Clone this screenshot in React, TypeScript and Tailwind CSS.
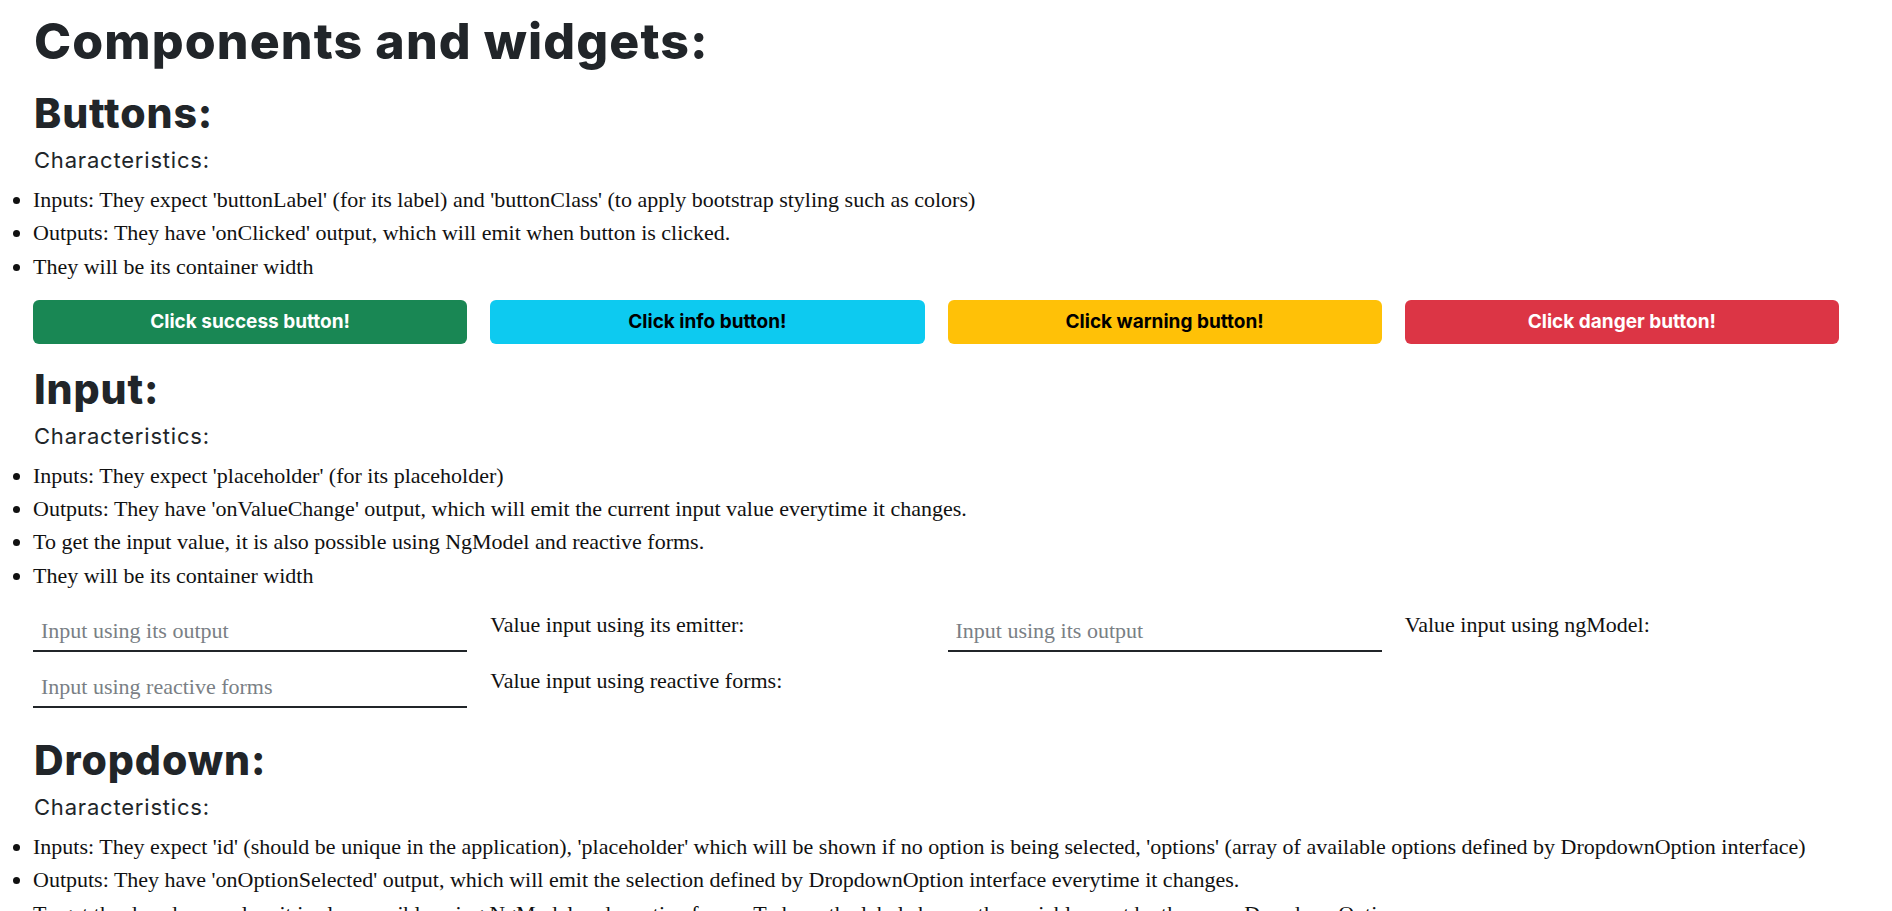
import React from "react";

function Characteristics() {
  return (
    <p className="mt-[6px] ml-[1px] font-['Inter','Noto_Sans',sans-serif] text-[22px] leading-[33px] text-[#212529] font-normal tracking-[0.8px]">
      Characteristics:
    </p>
  );
}

function Bullets({ items }: { items: string[] }) {
  return (
    <ul className="list-disc list-outside mt-[6px] font-['Liberation_Serif','DejaVu_Serif',serif] text-[22px] leading-[33.3px] text-[#111]">
      {items.map((t, i) => (
        <li key={i} className="whitespace-nowrap pl-0">
          {t}
        </li>
      ))}
    </ul>
  );
}

function H2({ children, mt }: { children: React.ReactNode; mt: string }) {
  return (
    <h2
      className={`${mt} ml-[1px] font-['Inter','Noto_Sans',sans-serif] text-[41px] leading-[49px] font-extrabold text-[#212529] tracking-[0.9px]`}
    >
      {children}
    </h2>
  );
}

const btns = [
  { label: "Click success button!", cls: "bg-[#198754] text-white" },
  { label: "Click info button!", cls: "bg-[#0dcaf0] text-black" },
  { label: "Click warning button!", cls: "bg-[#ffc107] text-black" },
  { label: "Click danger button!", cls: "bg-[#dc3545] text-white" },
];

function TextInput({ placeholder }: { placeholder: string }) {
  return (
    <input
      placeholder={placeholder}
      className="block w-full h-[40px] border-0 border-b-2 border-b-[#212529] bg-transparent pl-[8px] font-['Liberation_Serif','DejaVu_Serif',serif] text-[22px] outline-none placeholder:text-[#7a7f85]"
    />
  );
}

function ValueLabel({ children }: { children: React.ReactNode }) {
  return (
    <div className="-mt-[2px] font-['Liberation_Serif','DejaVu_Serif',serif] text-[22px] leading-[30px] text-[#111]">
      {children}
    </div>
  );
}

export default function App() {
  return (
    <div className="min-h-screen bg-white pl-[33px] pr-[53px] overflow-hidden">
      <h1 className="pt-[11px] ml-[1px] font-['Inter','Noto_Sans',sans-serif] text-[50px] leading-[60px] font-extrabold text-[#212529] tracking-[1.1px]">
        Components and widgets:
      </h1>

      <H2 mt="mt-[18px]">Buttons:</H2>
      <Characteristics />
      <Bullets
        items={[
          "Inputs: They expect 'buttonLabel' (for its label) and 'buttonClass' (to apply bootstrap styling such as colors)",
          "Outputs: They have 'onClicked' output, which will emit when button is clicked.",
          "They will be its container width",
        ]}
      />

      <div className="mt-[17px] grid grid-cols-4 gap-x-[23px]">
        {btns.map((b) => (
          <button
            key={b.label}
            className={`h-[44px] rounded-[6px] font-['Inter','Noto_Sans',sans-serif] text-[19px] font-bold ${b.cls}`}
          >
            {b.label}
          </button>
        ))}
      </div>

      <H2 mt="mt-[21px]">Input:</H2>
      <Characteristics />
      <Bullets
        items={[
          "Inputs: They expect 'placeholder' (for its placeholder)",
          "Outputs: They have 'onValueChange' output, which will emit the current input value everytime it changes.",
          "To get the input value, it is also possible using NgModel and reactive forms.",
          "They will be its container width",
        ]}
      />

      <div className="mt-[20px] grid grid-cols-4 gap-x-[23px] gap-y-[16px]">
        <TextInput placeholder="Input using its output" />
        <ValueLabel>Value input using its emitter:</ValueLabel>
        <TextInput placeholder="Input using its output" />
        <ValueLabel>Value input using ngModel:</ValueLabel>
        <TextInput placeholder="Input using reactive forms" />
        <ValueLabel>Value input using reactive forms:</ValueLabel>
      </div>

      <H2 mt="mt-[28px]">Dropdown:</H2>
      <Characteristics />
      <Bullets
        items={[
          "Inputs: They expect 'id' (should be unique in the application), 'placeholder' which will be shown if no option is being selected, 'options' (array of available options defined by DropdownOption interface)",
          "Outputs: They have 'onOptionSelected' output, which will emit the selection defined by DropdownOption interface everytime it changes.",
          "To get the dropdown value, it is also possible using NgModel and reactive forms. To have the label shown, the variable must be the same DropdownOption.",
          "They will be its container width",
        ]}
      />
    </div>
  );
}
